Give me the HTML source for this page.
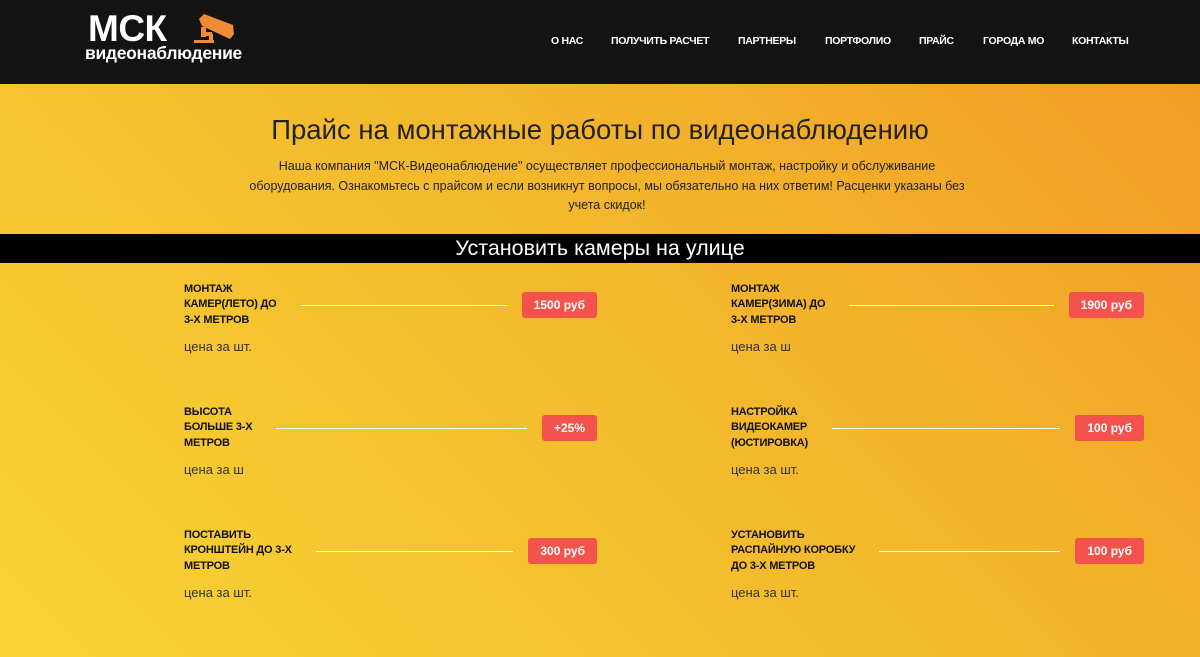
<!DOCTYPE html>
<html><head><meta charset="utf-8"><style>
*{margin:0;padding:0;box-sizing:border-box}
body{width:1200px;height:657px;overflow:hidden;font-family:"Liberation Sans","Noto Sans CJK SC",sans-serif;background:linear-gradient(225deg,#f29b25 0%,#f3b72c 45%,#f7d433 100%);position:relative}
.hdr{position:absolute;left:0;top:0;width:1200px;height:84px;background:#131313}
.nav{position:absolute;top:35px;color:#fff;font-size:10.5px;font-weight:bold;white-space:nowrap;letter-spacing:-0.3px}
h1{position:absolute;top:114px;left:0;width:1200px;text-align:center;font-size:27.5px;font-weight:normal;color:#222}
.intro{position:absolute;top:157px;left:244px;width:726px;text-align:center;font-size:12.5px;line-height:19.5px;color:#222}
.band{position:absolute;top:234px;left:0;width:1200px;height:29px;background:#000;color:#fff;text-align:center;font-size:21.5px;line-height:29px}
.item{position:absolute;display:flex;align-items:center;height:46px}
.t{font-size:11px;font-weight:bold;line-height:15.3px;white-space:nowrap;color:#111;letter-spacing:-0.2px}
.ln{flex:1;height:1px;background:#fff;margin:0 15px 0 24px}
.b{background:#f4524d;color:#fff;font-size:12px;font-weight:bold;height:26px;line-height:26px;padding:0 12px;border-radius:3px;white-space:nowrap}
.s{position:absolute;font-size:13px;color:#333}
</style></head><body>
<div class="hdr">
<div style="position:absolute;left:88px;top:8px;color:#fff;font-size:37px;font-weight:bold;letter-spacing:-0.5px">МСК</div>
<div style="position:absolute;left:85px;top:43px;color:#fff;font-size:17.5px;font-weight:bold;letter-spacing:-0.3px">видеонаблюдение</div>
<svg style="position:absolute;left:190px;top:12px" width="50" height="35" viewBox="0 0 50 35"><g fill="#f08a35"><polygon points="9,7 14,2 43,13 44,22 40,27 12,14"/><rect x="11" y="15" width="5" height="10"/><rect x="16" y="20" width="6" height="4"/><rect x="4" y="28" width="20" height="3"/><rect x="19" y="22" width="4" height="9"/></g></svg>
<div class="nav" style="left:551px">О НАС</div>
<div class="nav" style="left:611px">ПОЛУЧИТЬ РАСЧЕТ</div>
<div class="nav" style="left:738px">ПАРТНЕРЫ</div>
<div class="nav" style="left:825px">ПОРТФОЛИО</div>
<div class="nav" style="left:919px">ПРАЙС</div>
<div class="nav" style="left:983px">ГОРОДА МО</div>
<div class="nav" style="left:1072px">КОНТАКТЫ</div>
</div>
<h1>Прайс на монтажные работы по видеонаблюдению</h1>
<div class="intro">Наша компания "МСК-Видеонаблюдение" осуществляет профессиональный монтаж, настройку и обслуживание оборудования. Ознакомьтесь с прайсом и если возникнут вопросы, мы обязательно на них ответим! Расценки указаны без учета скидок!</div>
<div class="band">Установить камеры на улице</div>

<div class="item" style="left:184px;top:282px;width:413px"><div class="t">МОНТАЖ<br>КАМЕР(ЛЕТО) ДО<br>3-Х МЕТРОВ</div><div class="ln"></div><div class="b">1500 руб</div></div>
<div class="s" style="left:184px;top:339px">цена за шт.</div>
<div class="item" style="left:184px;top:405px;width:413px"><div class="t">ВЫСОТА<br>БОЛЬШЕ 3-Х<br>МЕТРОВ</div><div class="ln"></div><div class="b">+25%</div></div>
<div class="s" style="left:184px;top:462px">цена за ш</div>
<div class="item" style="left:184px;top:528px;width:413px"><div class="t">ПОСТАВИТЬ<br>КРОНШТЕЙН ДО 3-Х<br>МЕТРОВ</div><div class="ln"></div><div class="b">300 руб</div></div>
<div class="s" style="left:184px;top:585px">цена за шт.</div>

<div class="item" style="left:731px;top:282px;width:413px"><div class="t">МОНТАЖ<br>КАМЕР(ЗИМА) ДО<br>3-Х МЕТРОВ</div><div class="ln"></div><div class="b">1900 руб</div></div>
<div class="s" style="left:731px;top:339px">цена за ш</div>
<div class="item" style="left:731px;top:405px;width:413px"><div class="t">НАСТРОЙКА<br>ВИДЕОКАМЕР<br>(ЮСТИРОВКА)</div><div class="ln"></div><div class="b">100 руб</div></div>
<div class="s" style="left:731px;top:462px">цена за шт.</div>
<div class="item" style="left:731px;top:528px;width:413px"><div class="t">УСТАНОВИТЬ<br>РАСПАЙНУЮ КОРОБКУ<br>ДО 3-Х МЕТРОВ</div><div class="ln"></div><div class="b">100 руб</div></div>
<div class="s" style="left:731px;top:585px">цена за шт.</div>
</body></html>
